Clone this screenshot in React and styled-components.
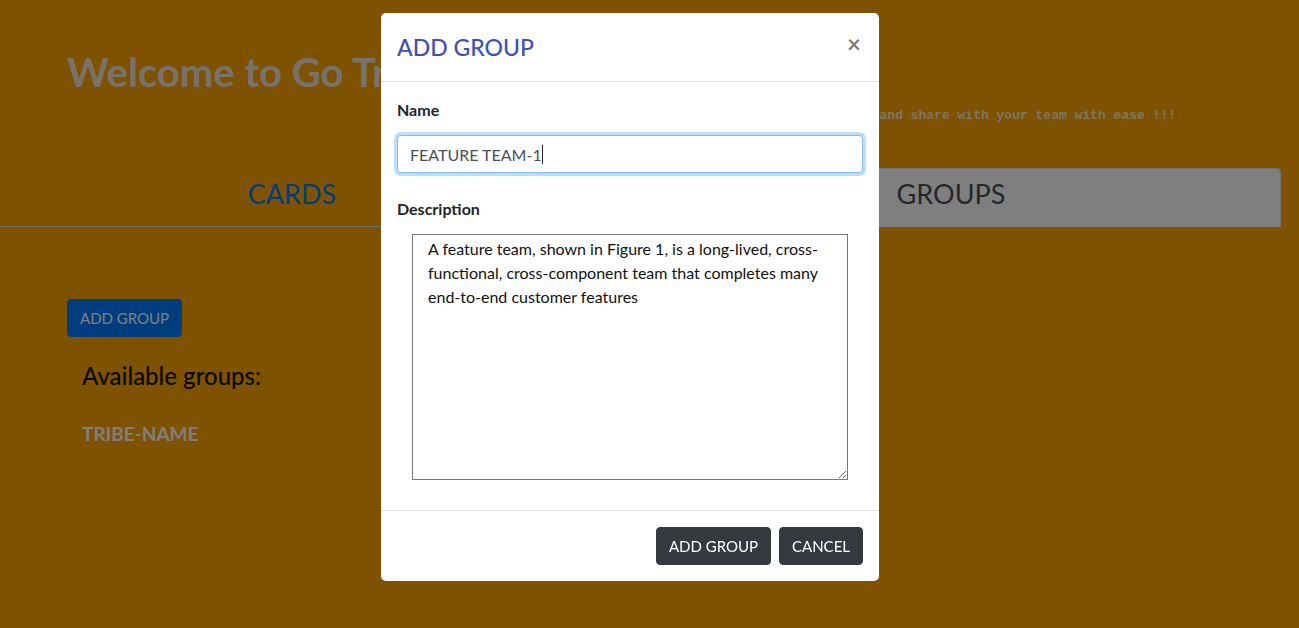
import React from "react"
import styled, { createGlobalStyle } from "styled-components"

const GlobalStyle = createGlobalStyle`
  html, body {
    margin: 0;
    padding: 0;
    background: #ffa500;
    font-family: "Lato", "Liberation Sans", sans-serif;
    color: #212529;
  }
  * { box-sizing: border-box; }
`

const Page = styled.div`
  min-height: 628px;
  overflow: hidden;
`

const Header = styled.header`
  padding: 48px 0 0 67px;
  height: 168px;
`

const Title = styled.h1`
  margin: 0;
  font-size: 40px;
  font-weight: 700;
  line-height: 48px;
  color: #eee6d6;
`

const Tagline = styled.p`
  margin: 12px 123px 0 0;
  text-align: right;
  font-family: "Liberation Mono", monospace;
  font-size: 13px;
  font-weight: 700;
  color: #f5ead0;
`

const Tabs = styled.nav`
  display: flex;
  margin-right: 18px;
  border-bottom: 1px solid #dee2e6;
`

const Tab = styled.a`
  flex: ${p => (p.$active ? "1" : "0 0 584px")};
  margin-left: ${p => (p.$active ? "37px" : "0")};
  margin-bottom: -1px;
  padding: 8px 0 15px;
  text-align: center;
  font-size: 27px;
  line-height: 34px;
  color: ${p => (p.$active ? "#495057" : "#007bff")};
  background: ${p => (p.$active ? "#fff" : "transparent")};
  border: 1px solid ${p => (p.$active ? "#dee2e6" : "transparent")};
  border-bottom-color: ${p => (p.$active ? "#fff" : "transparent")};
  border-radius: 4px 4px 0 0;
`

const Content = styled.section`
  padding: 72px 0 0 67px;
`

const Button = styled.button`
  font-family: inherit;
  font-size: 15px;
  line-height: 24px;
  padding: 6px 12px;
  border: 1px solid ${p => p.$bg};
  border-radius: 4px;
  color: #fff;
  background: ${p => p.$bg};
  cursor: pointer;
`

const GroupsTitle = styled.h4`
  margin: 24px 0 0 15px;
  font-size: 24px;
  font-weight: 500;
  line-height: 30px;
  color: #111;
`

const GroupName = styled.h5`
  margin: 30px 0 0 15px;
  font-size: 19px;
  font-weight: 700;
  line-height: 26px;
  color: #fdfdff;
`

const Backdrop = styled.div`
  position: fixed;
  inset: 0;
  background: rgba(0, 0, 0, 0.5);
`

const Dialog = styled.div`
  position: fixed;
  top: 13px;
  left: 381px;
  width: 498px;
  background: #fff;
  border-radius: 5px;
  display: flex;
  flex-direction: column;
`

const ModalHeader = styled.div`
  display: flex;
  align-items: center;
  justify-content: space-between;
  padding: 16px;
  border-bottom: 1px solid #dee2e6;
`

const ModalTitle = styled.h4`
  margin: 0;
  font-size: 23px;
  font-weight: 500;
  line-height: 36px;
  color: #3f51b5;
`

const Close = styled.span`
  font-size: 24px;
  font-weight: 700;
  line-height: 1;
  color: #000;
  opacity: 0.5;
  margin: -7px 2px 0 0;
`

const ModalBody = styled.div`
  padding: 16px;
`

const Label = styled.label`
  display: block;
  font-size: 16px;
  font-weight: 700;
  line-height: 24px;
  margin-bottom: 13px;
  color: #212529;
`

const Field = styled.div`
  position: relative;
  margin-bottom: 24px;
`

const Input = styled.input`
  display: block;
  width: 100%;
  height: 38px;
  padding: 6px 12px;
  font-family: inherit;
  font-size: 16px;
  color: #495057;
  border: 1px solid #80bdff;
  border-radius: 4px;
  outline: 0;
  box-shadow: 0 0 0 3px rgba(0, 123, 255, 0.25);
  caret-color: transparent;
`

const CaretLayer = styled.div`
  position: absolute;
  inset: 0;
  padding: 0 13px;
  display: flex;
  align-items: center;
  font-size: 16px;
  pointer-events: none;

  span { visibility: hidden; white-space: pre; }
  i {
    display: block;
    width: 1px;
    height: 19px;
    background: #222;
  }
`

const TextArea = styled.textarea`
  display: block;
  width: 436px;
  height: 246px;
  margin: 0 0 14px 15px;
  padding: 2px 15px;
  font-family: inherit;
  font-size: 16px;
  line-height: 24px;
  color: #111;
  border: 1px solid #767676;
  border-radius: 0;
  resize: both;
  overflow: hidden;
`

const ModalFooter = styled.div`
  display: flex;
  justify-content: flex-end;
  gap: 8px;
  padding: 16px;
  border-top: 1px solid #dee2e6;
`

const groupName = "FEATURE TEAM-1"
const description =
  "A feature team, shown in Figure 1, is a long-lived, cross-functional, cross-component team that completes many end-to-end customer features"

export default function App() {
  return (
    <Page>
      <GlobalStyle />
      <Header>
        <Title>Welcome to Go Tribe</Title>
        <Tagline>Create your cards and share with your team with ease !!!</Tagline>
      </Header>
      <Tabs>
        <Tab>CARDS</Tab>
        <Tab $active>GROUPS</Tab>
      </Tabs>
      <Content>
        <Button $bg="#007bff">ADD GROUP</Button>
        <GroupsTitle>Available groups:</GroupsTitle>
        <GroupName>TRIBE-NAME</GroupName>
      </Content>

      <Backdrop />
      <Dialog>
        <ModalHeader>
          <ModalTitle>ADD GROUP</ModalTitle>
          <Close>×</Close>
        </ModalHeader>
        <ModalBody>
          <Label>Name</Label>
          <Field>
            <Input defaultValue={groupName} />
            <CaretLayer>
              <span>{groupName}</span>
              <i />
            </CaretLayer>
          </Field>
          <Label>Description</Label>
          <TextArea defaultValue={description} />
        </ModalBody>
        <ModalFooter>
          <Button $bg="#343a40">ADD GROUP</Button>
          <Button $bg="#343a40">CANCEL</Button>
        </ModalFooter>
      </Dialog>
    </Page>
  )
}
